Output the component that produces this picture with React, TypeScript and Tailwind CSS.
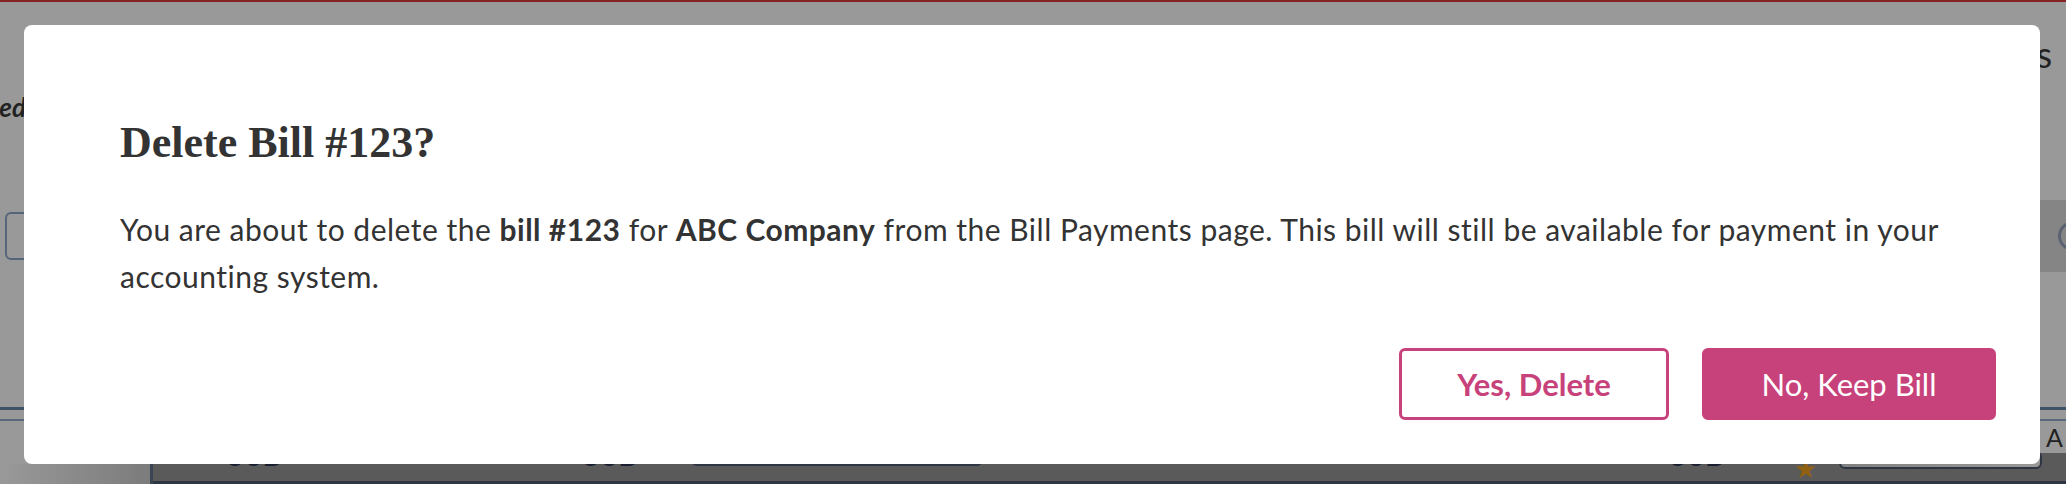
import React from "react";

export default function App() {
  return (
    <div className="relative w-[2066px] h-[484px] overflow-hidden bg-white font-['Lato',sans-serif] text-[#333]">
      {/* Page behind the dialog */}
      <div className="flex flex-col h-full">
        <div className="h-[2px] bg-[#e0393b]" />
        <div className="flex justify-between items-start h-[198px]">
          <div className="w-[26px] flex justify-end pt-[92px]">
            <span className="whitespace-nowrap text-[26px] leading-none font-bold italic text-[#393939]">
              Selected
            </span>
          </div>
          <div className="pt-[34px] pr-[14px] text-[36px] leading-none text-[#393939]">Bills</div>
        </div>
        <div className="flex items-center justify-between h-[72px]">
          <div className="ml-[5px] h-[48px] w-[220px] rounded-md border-2 border-[#8fa8cc]" />
          <div className="h-full w-[700px] bg-[#dedede] flex items-center justify-end">
            <div className="w-[30px] h-[30px] -mr-[22px] rounded-full border-[3px] border-[#98a3be]" />
          </div>
        </div>
        <div className="h-[135px]" />
        <div className="h-[3px] bg-[#698aaa]" />
        <div className="h-[9px]" />
        <div className="h-[2px] bg-[#96b0cc]" />
        <div className="flex h-[63px]">
          <div className="w-[150px] h-full flex flex-col">
            <div className="h-[43px]" />
            <div className="flex-1 bg-gradient-to-r from-[#ffffff] to-[#cfcfcf]" />
          </div>
          <div className="flex-1 flex flex-col border-l-[3px] border-[#61738a]">
            <div className="h-[43px] flex justify-end items-end pr-[3px]">
              <span className="text-[25px] leading-none text-[#393939] pb-[3px]">A</span>
            </div>
            <div className="flex-1 bg-[#969696] flex items-start border-b-[3px] border-[#4d5a70]">
              <span className="ml-[72px] -mt-[15px] text-[32px] leading-[32px] italic text-[#2b3550]">USD</span>
              <span className="ml-[295px] -mt-[15px] text-[32px] leading-[32px] italic text-[#2b3550]">USD</span>
              <div className="ml-[49px] -mt-[24px] w-[292px] h-[37px] rounded-md border-2 border-[#4d5a70] bg-[#a5a5a5]" />
              <span className="ml-[685px] -mt-[15px] text-[32px] leading-[32px] italic text-[#2b3550]">USD</span>
              <span className="ml-[66px] mt-[2px] text-[26px] leading-none text-[#f0a020]">★</span>
              <div className="ml-[22px] w-[203px] h-[18px] -mt-[2px] rounded-md border-2 border-[#4d5a70] bg-gradient-to-r from-[#d8d8d8] to-[#ffffff]" />
            </div>
          </div>
        </div>
      </div>

      {/* Overlay */}
      <div className="absolute inset-0 bg-black/40" />

      {/* Dialog */}
      <div className="absolute left-[24px] top-[25px] w-[2016px] h-[439px] rounded-[8px] bg-white flex flex-col pl-[96px] pr-[44px] pt-[96px]">
        <h2 className="font-['Liberation_Serif',serif] font-bold text-[44px] leading-none text-[#333]">
          Delete Bill #123?
        </h2>
        <p className="mt-[41px] text-[30px] leading-[47px] tracking-[0.5px] text-[#333]">
          You are about to delete the <span className="font-bold">bill #123</span> for{" "}
          <span className="font-bold">ABC Company</span> from the Bill Payments page. This bill will still be
          available for payment in your accounting system.
        </p>
        <div className="mt-[48px] flex justify-end gap-[33px]">
          <button className="w-[270px] h-[72px] rounded-[6px] border-[3px] border-[#c7417b] bg-white text-[#c7417b] text-[31px] font-bold">
            Yes, Delete
          </button>
          <button className="w-[294px] h-[72px] rounded-[6px] border-[3px] border-[#c7417b] bg-[#c7417b] text-white text-[31px]">
            No, Keep Bill
          </button>
        </div>
      </div>
    </div>
  );
}
